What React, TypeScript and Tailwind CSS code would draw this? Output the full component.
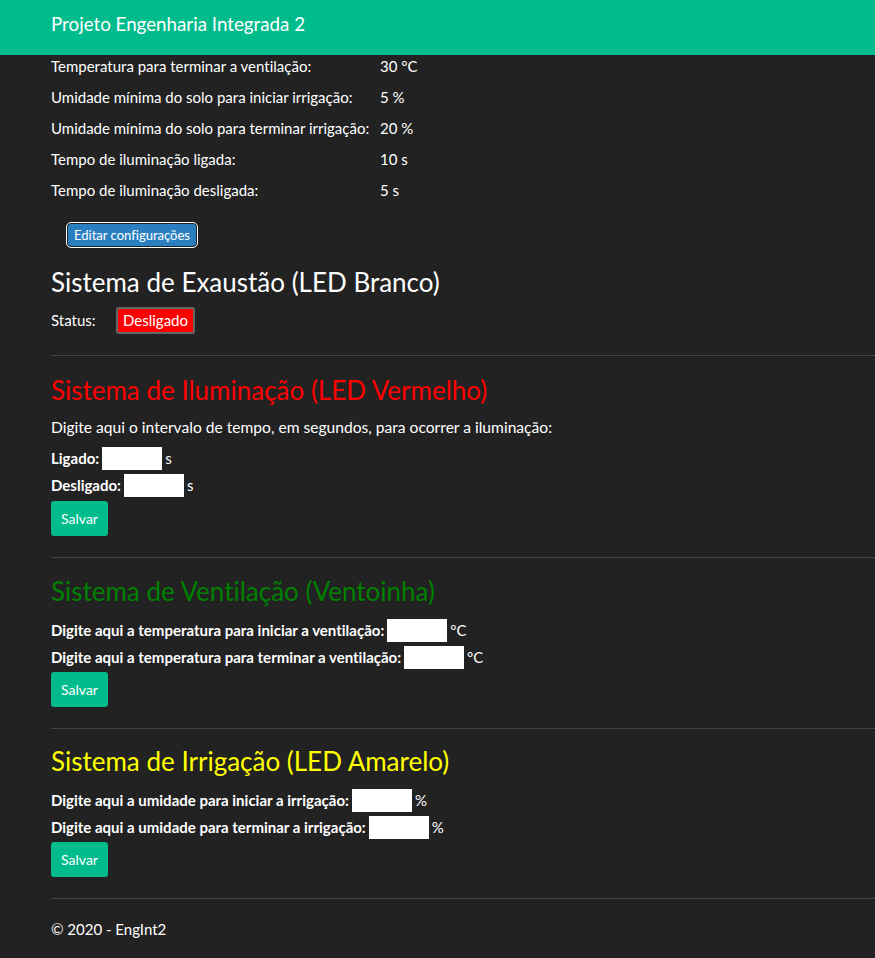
import React from "react";

// linhas da tabela de configurações atuais
const configRows = [
  { label: "Temperatura para terminar a ventilação:", value: "30 °C" },
  { label: "Umidade mínima do solo para iniciar irrigação:", value: "5 %" },
  { label: "Umidade mínima do solo para terminar irrigação:", value: "20 %" },
  { label: "Tempo de iluminação ligada:", value: "10 s" },
  { label: "Tempo de iluminação desligada:", value: "5 s" },
];

const InputRow = ({ label, unit }: { label: string; unit: string }) => (
  <div className="flex h-[27px] items-center gap-[3px]">
    <span className="font-bold">{label}</span>
    <input type="text" className="h-[23px] w-[60px] border-0 bg-white px-1 text-black outline-none" />
    <span>{unit}</span>
  </div>
);

const SaveButton = ({ className = "" }: { className?: string }) => (
  <button
    className={`h-[35px] w-[57px] rounded-[3px] bg-[#00bc8c] text-center text-[14px] text-white ${className}`}
  >
    Salvar
  </button>
);

const Divider = () => <div className="mt-[21px] border-t border-[#444]" />;

export default function App() {
  return (
    <div className="min-h-screen bg-[#222] font-['Lato',sans-serif] text-[15px] leading-normal text-white [font-variant-ligatures:none]">
      <header className="h-[55px] bg-[#00bc8c] pl-[51px] pt-[10px]">
        <span className="text-[18.75px] leading-[28px] text-white">Projeto Engenharia Integrada 2</span>
      </header>

      <main className="pl-[51px]">
        <table>
          <tbody>
            {configRows.map((row, i) => (
              <tr key={i}>
                <td className={`w-[329px] leading-[23px] ${i === 0 ? "pb-1" : "py-1"}`}>{row.label}</td>
                <td className={`leading-[23px] ${i === 0 ? "pb-1" : "py-1"}`}>{row.value}</td>
              </tr>
            ))}
          </tbody>
        </table>

        <button className="ml-[17px] mt-[18px] h-[22px] w-[128px] rounded-[3px] bg-[#2a7fc0] text-[13px] leading-[22px] text-white outline outline-1 outline-offset-1 outline-white">
          Editar configurações
        </button>

        <h3 className="mb-2 mt-[19.5px] text-[26px] leading-[33.6px]">Sistema de Exaustão (LED Branco)</h3>
        <div className="flex h-[27px] items-center">
          <span className="w-[65px]">Status:</span>
          <span className="flex h-[27px] w-[79px] items-center justify-center rounded-[3px] border-2 border-[#666] bg-[#ff0000] text-white">
            Desligado
          </span>
        </div>
        <Divider />

        <h3 className="mb-2 mt-[18px] text-[26px] leading-[33.6px] text-[#ff0000]">Sistema de Iluminação (LED Vermelho)</h3>
        <p className="mb-[7px] text-[15.6px] leading-[22.5px]">Digite aqui o intervalo de tempo, em segundos, para ocorrer a iluminação:</p>
        <InputRow label="Ligado:" unit="s" />
        <InputRow label="Desligado:" unit="s" />
        <SaveButton className="mt-[2px]" />
        <Divider />

        <h3 className="mb-2 mt-[17px] text-[26px] leading-[33.6px] text-[#008000]">Sistema de Ventilação (Ventoinha)</h3>
        <InputRow label="Digite aqui a temperatura para iniciar a ventilação:" unit="°C" />
        <InputRow label="Digite aqui a temperatura para terminar a ventilação:" unit="°C" />
        <SaveButton className="mt-[1px]" />
        <Divider />

        <h3 className="mb-2 mt-[16.5px] text-[26px] leading-[33.6px] text-[#ffff00]">Sistema de Irrigação (LED Amarelo)</h3>
        <InputRow label="Digite aqui a umidade para iniciar a irrigação:" unit="%" />
        <InputRow label="Digite aqui a umidade para terminar a irrigação:" unit="%" />
        <SaveButton className="mt-[1px]" />
        <Divider />

        <footer className="pb-[20px] pt-[19px]">© 2020 - EngInt2</footer>
      </main>
    </div>
  );
}
